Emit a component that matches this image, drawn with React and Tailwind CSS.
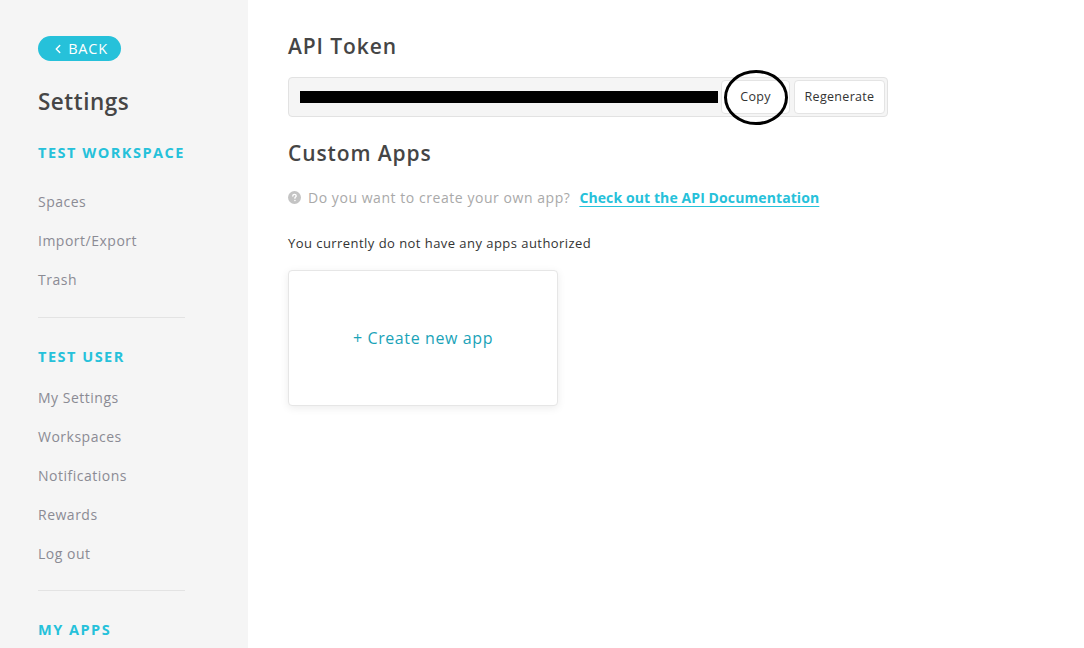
import { ChevronLeft } from 'lucide-react';

const font = { fontFamily: '"Open Sans", "Noto Sans", Arial, sans-serif' };

const workspaceLinks = ['Spaces', 'Import/Export', 'Trash'];
const userLinks = ['My Settings', 'Workspaces', 'Notifications', 'Rewards', 'Log out'];

const SectionTitle = ({ children }) => (
  <div className="h-[39px] flex items-center text-[14.5px] font-bold tracking-[1.5px] text-[#26c1da]">
    {children}
  </div>
);

const NavItem = ({ children }) => (
  <div className="h-[39px] flex items-center text-[14px] tracking-[0.5px] text-[#8b8b94]">{children}</div>
);

const Sidebar = () => (
  <aside className="w-[248px] shrink-0 bg-[#f5f5f5] pl-[38px] pt-[36px] min-h-[648px]">
    <button className="h-[25px] w-[83px] rounded-full bg-[#26c1da] text-white flex items-center justify-center gap-[3px] text-[14.5px] tracking-[0.8px]">
      <ChevronLeft className="w-[14px] h-[14px]" strokeWidth={2.5} />
      BACK
    </button>

    <h1 className="mt-[26px] text-[22.5px] font-semibold tracking-[0.5px] text-[#464646] leading-[30px]">Settings</h1>

    <div className="mt-[16px]">
      <SectionTitle>TEST WORKSPACE</SectionTitle>
      <div className="mt-[10px]">
        {workspaceLinks.map((l) => (
          <NavItem key={l}>{l}</NavItem>
        ))}
      </div>
    </div>

    <div className="w-[147px] h-px bg-[#e3e3e3] mt-[18px]" />

    <div className="mt-[19px]">
      <SectionTitle>TEST USER</SectionTitle>
      <div className="mt-[2px]">
        {userLinks.map((l) => (
          <NavItem key={l}>{l}</NavItem>
        ))}
      </div>
    </div>

    <div className="w-[147px] h-px bg-[#e3e3e3] mt-[17px]" />

    <div className="mt-[19px]">
      <SectionTitle>MY APPS</SectionTitle>
    </div>
  </aside>
);

const HelpIcon = () => (
  <svg width="13" height="13" viewBox="0 0 16 16" className="shrink-0">
    <circle cx="8" cy="8" r="8" fill="#c4c4c4" />
    <path
      d="M5.9 6.1c0-1.2.9-2 2.1-2s2.1.8 2.1 1.9c0 1.4-1.6 1.5-1.6 2.8"
      stroke="#fff"
      strokeWidth="1.7"
      fill="none"
      strokeLinecap="round"
    />
    <circle cx="8.5" cy="11.7" r="1" fill="#fff" />
  </svg>
);

export default function App() {
  return (
    <div className="flex w-full min-h-[648px] bg-white overflow-hidden" style={font}>
      <Sidebar />

      <main className="flex-1 pl-[40px] pt-[33px]">
        <h2 className="text-[21px] font-semibold tracking-[0.9px] text-[#454545] leading-[26px]">API Token</h2>

        <div className="mt-[18px] w-[600px] h-[40px] bg-[#f5f5f5] border border-[#e2e2e2] rounded-[4px] flex items-center pl-[11px] pr-[2px]">
          <div className="w-[418px] h-[12px] bg-black" />
          <div className="ml-[3px] relative">
            <button className="w-[69px] h-[34px] bg-white border border-[#e4e4e4] rounded-[4px] text-[12.5px] tracking-[0.3px] text-[#333]">
              Copy
            </button>
            <div className="absolute left-[3px] top-[-10px] w-[64px] h-[55px] rounded-[50%] border-[3.5px] border-black pointer-events-none" />
          </div>
          <button className="ml-[4px] w-[91px] h-[34px] bg-white border border-[#e4e4e4] rounded-[4px] text-[12.5px] tracking-[0.3px] text-[#333]">
            Regenerate
          </button>
        </div>

        <h2 className="mt-[23px] text-[21px] font-semibold tracking-[0.9px] text-[#454545] leading-[26px]">Custom Apps</h2>

        <div className="mt-[21px] flex items-center gap-[7px] text-[14px]">
          <HelpIcon />
          <span className="text-[#a9a9a9] tracking-[0.55px]">Do you want to create your own app?</span>
          <a className="ml-[2px] font-bold tracking-[0.1px] text-[#26c1da] underline underline-offset-[3px]">
            Check out the API Documentation
          </a>
        </div>

        <p className="mt-[26px] text-[13px] tracking-[0.45px] text-[#333]">You currently do not have any apps authorized</p>

        <div className="mt-[16px] w-[270px] h-[136px] bg-white border border-[#e6e6e6] rounded-[4px] shadow-[0_2px_8px_rgba(0,0,0,0.08)] flex items-center justify-center">
          <span className="text-[16px] tracking-[0.6px] text-[#1aa3b8]">+ Create new app</span>
        </div>
      </main>
    </div>
  );
}
